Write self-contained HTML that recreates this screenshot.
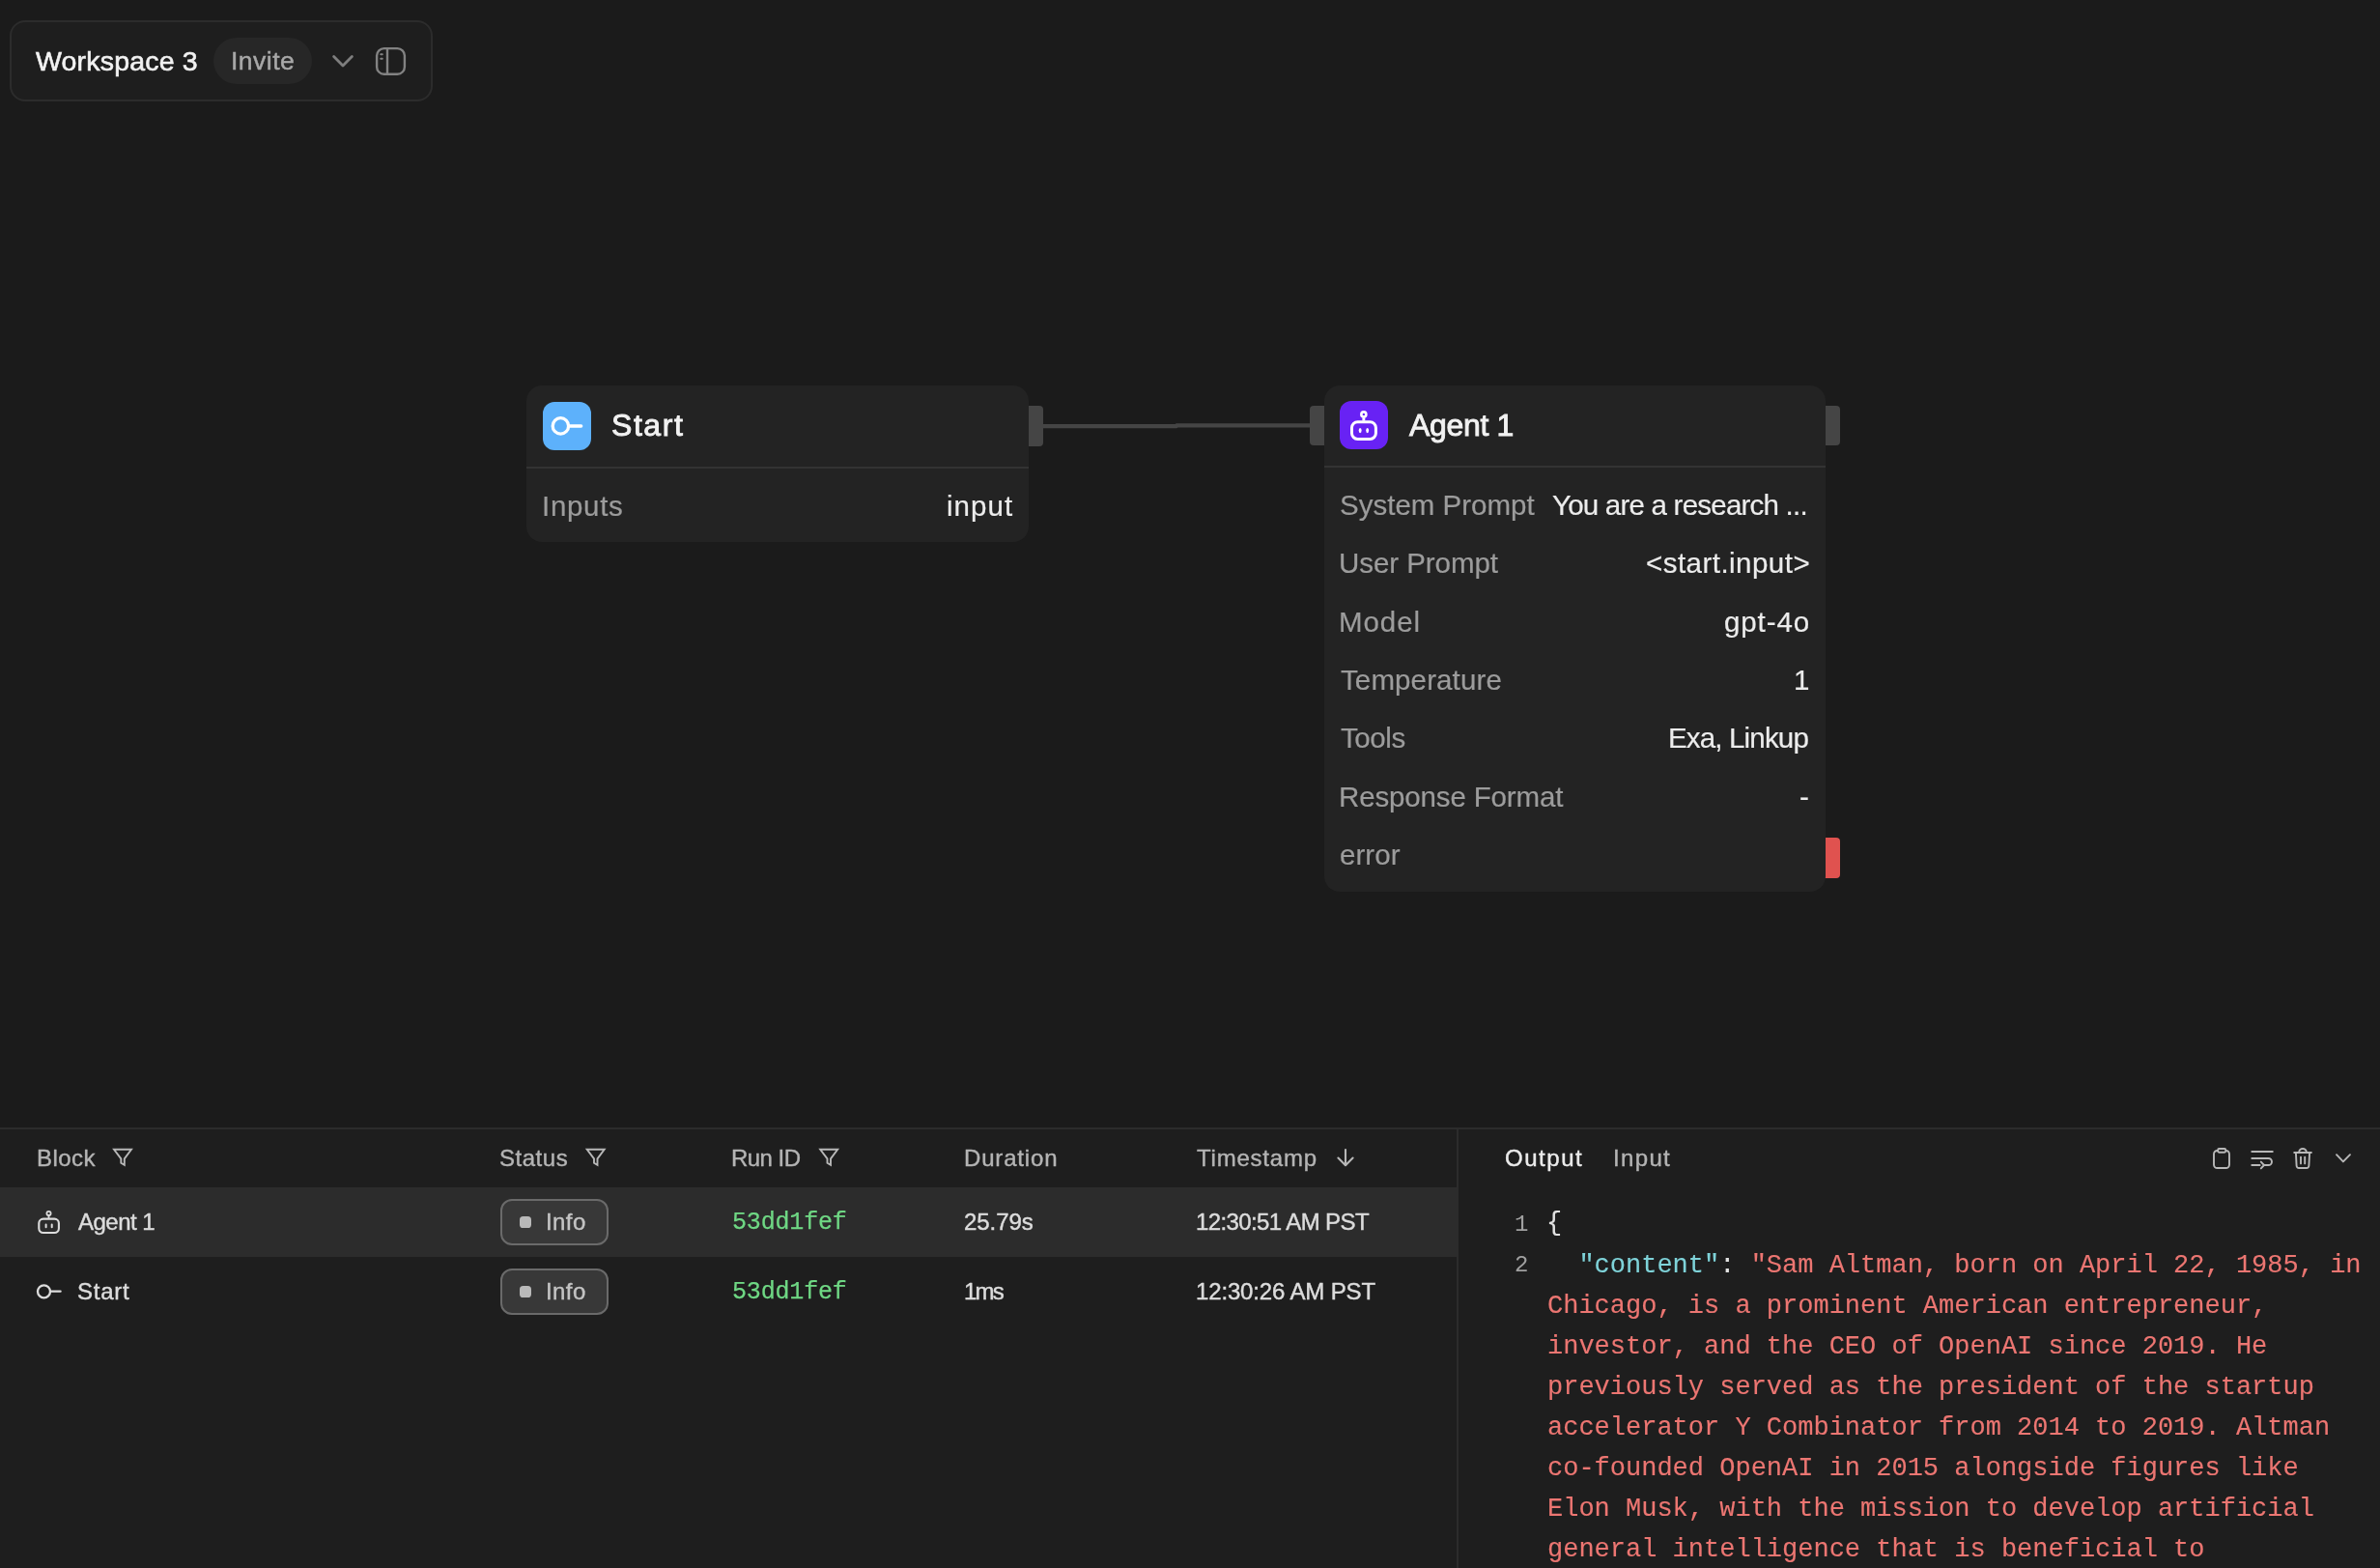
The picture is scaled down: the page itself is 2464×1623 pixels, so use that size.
<!DOCTYPE html>
<html><head><meta charset="utf-8"><title>Workspace 3</title>
<style>
html,body{margin:0;padding:0}
body{background:#1b1b1b;font-family:"Liberation Sans",sans-serif}
#root{position:relative;width:2464px;height:1623px;overflow:hidden;background:#1b1b1b}
.a{position:absolute;box-sizing:border-box}
.t{position:absolute;white-space:pre;line-height:1;will-change:transform}
svg{position:absolute;overflow:visible}
.code{position:absolute;-webkit-text-stroke:0.12px currentColor;left:1602.3px;top:1246.5px;font:27px/42px "Liberation Mono",monospace;color:#ec7672;white-space:pre;letter-spacing:0px;will-change:transform}
</style></head><body><div id="root">

<!-- header card -->
<div class="a" style="left:10px;top:21px;width:438px;height:84px;border:2px solid #2c2c2c;border-radius:16px;background:#1e1e1e"></div>
<div class="a" style="left:221px;top:39px;width:102px;height:48px;border-radius:24px;background:#272727"></div>
<svg style="left:0;top:0" width="460" height="110" fill="none" stroke="#828282" stroke-width="2.4" stroke-linecap="round" stroke-linejoin="round">
  <path d="M345.6 58.6 L355 68 L364.4 58.6" stroke-width="2.8" stroke="#7e7e7e"/>
  <rect x="390.1" y="50.1" width="28.8" height="26.6" rx="7.5"/>
  <path d="M401 50.1 V76.7"/>
  <path d="M394.2 56.2 H395.8 M394.2 60.8 H395.8" stroke-width="2"/>
</svg>

<!-- edge -->
<svg style="left:0;top:0" width="2464" height="600" fill="none" stroke="#454545" stroke-width="4.3"><path d="M1079 441.05 H1217.6 L1218.4 440.45 H1357"/></svg>

<!-- start node -->
<div class="a" style="left:1065px;top:420px;width:15px;height:42px;border-radius:0 4px 4px 0;background:#454545"></div>
<div class="a" style="left:545px;top:399.4px;width:520px;height:162px;border-radius:16px;background:#232323"></div>
<div class="a" style="left:545px;top:482.5px;width:520px;height:2px;background:#333333"></div>
<div class="a" style="left:562px;top:416px;width:50px;height:50px;border-radius:12px;background:#5db1fb"></div>
<svg style="left:0;top:0" width="2464" height="1000" fill="none" stroke="#fff" stroke-width="3.3" stroke-linecap="round">
  <circle cx="580.4" cy="440.9" r="8.2"/>
  <path d="M590 441.05 H601.6" stroke-width="3.5"/>
</svg>

<!-- agent node -->
<div class="a" style="left:1356px;top:420px;width:16px;height:41px;border-radius:4px 0 0 4px;background:#454545"></div>
<div class="a" style="left:1889px;top:420px;width:16.2px;height:41px;border-radius:0 4px 4px 0;background:#454545"></div>
<div class="a" style="left:1889px;top:866.6px;width:16.2px;height:42.2px;border-radius:0 4px 4px 0;background:#e0524f"></div>
<div class="a" style="left:1371px;top:399px;width:519px;height:524px;border-radius:16px;background:#232323"></div>
<div class="a" style="left:1371px;top:482px;width:519px;height:2px;background:#333333"></div>
<div class="a" style="left:1387px;top:415.4px;width:50px;height:50px;border-radius:12px;background:#6822f4"></div>
<svg style="left:0;top:0" width="2464" height="1000" fill="none" stroke="#fff" stroke-width="3" stroke-linecap="round" stroke-linejoin="round">
  <rect x="1399.5" y="436.7" width="24.9" height="17.7" rx="6"/>
  <circle cx="1411.85" cy="428.9" r="2.5" stroke-width="2.6"/>
  <path d="M1411.85 432.2 V435.6" stroke-width="2.9" stroke-linecap="butt"/>
  <ellipse cx="1408.15" cy="445.55" rx="1.45" ry="2.65" fill="#fff" stroke="none"/>
  <ellipse cx="1415.65" cy="445.55" rx="1.45" ry="2.65" fill="#fff" stroke="none"/>
</svg>

<!-- terminal -->
<div class="a" style="left:0;top:1167px;width:2464px;height:456px;background:#1e1e1e;border-top:2px solid #2c2c2c"></div>
<div class="a" style="left:0;top:1229px;width:1508px;height:72px;background:#2c2c2c"></div>
<div class="a" style="left:1508px;top:1168px;width:2px;height:455px;background:#2c2c2c"></div>

<!-- badges -->
<div class="a" style="left:518.2px;top:1240.8px;width:111.5px;height:48.2px;border:2px solid #6a6a6a;border-radius:12px;background:#383838"></div>
<div class="a" style="left:538px;top:1259px;width:12.1px;height:12.1px;border-radius:3.6px;background:#b9b9b9"></div>
<div class="a" style="left:518.2px;top:1312.8px;width:111.5px;height:48.2px;border:2px solid #6a6a6a;border-radius:12px;background:#383838"></div>
<div class="a" style="left:538px;top:1331px;width:12.1px;height:12.1px;border-radius:3.6px;background:#b9b9b9"></div>

<!-- terminal icons -->
<svg style="left:0;top:1100px" width="2464" height="523" viewBox="0 1100 2464 523" fill="none" stroke="#b8b8b8" stroke-width="1.9" stroke-linecap="round" stroke-linejoin="round">
  <!-- filters -->
  <path d="M118 1189.7 H136 L128.8 1199.4 V1205.8 L125.3 1203.8 V1199.4 Z" stroke-linejoin="miter"/>
  <path transform="translate(489.7 0)" d="M118 1189.7 H136 L128.8 1199.4 V1205.8 L125.3 1203.8 V1199.4 Z" stroke-linejoin="miter"/>
  <path transform="translate(731.2 0)" d="M118 1189.7 H136 L128.8 1199.4 V1205.8 L125.3 1203.8 V1199.4 Z" stroke-linejoin="miter"/>
  <!-- sort arrow -->
  <path d="M1393 1190 V1206 M1385.4 1198.6 L1393 1206.2 L1400.6 1198.6" stroke-width="2.1"/>
  <!-- row agent icon -->
  <g stroke="#dcdcdc" stroke-width="2.1">
    <rect x="40.3" y="1261.6" width="20.6" height="14.4" rx="4.5"/>
    <circle cx="50.5" cy="1255.9" r="2.1" stroke-width="1.8"/>
    <path d="M50.5 1258.6 V1260.8" stroke-width="1.8"/>
    <path d="M47.6 1267.6 V1270.2 M53.7 1267.6 V1270.2" stroke-width="2"/>
    <circle cx="45.5" cy="1336.8" r="6.5" stroke-width="2.3"/>
    <path d="M53 1336.7 H62.6" stroke-width="2.3"/>
  </g>
  <!-- clipboard -->
  <rect x="2292" y="1191" width="16" height="18" rx="3.5"/>
  <rect x="2296.2" y="1189" width="8" height="3.8" rx="1.2" fill="#1e1e1e"/>
  <!-- wrap -->
  <path d="M2331.3 1192 H2352.8 M2331.3 1199 H2348.5 A3.5 3.5 0 0 1 2348.5 1206 H2343.8 M2331.3 1206 H2339.6 M2340.8 1202.6 L2344 1206 L2340.8 1209.4"/>
  <!-- trash -->
  <path d="M2375.2 1193 H2392.9 M2376.9 1193 L2377.6 1206.6 A2.4 2.4 0 0 0 2380 1209 H2388 A2.4 2.4 0 0 0 2390.4 1206.6 L2391.1 1193 M2380.2 1192.6 A3.8 3.6 0 0 1 2387.8 1192.6 M2382 1197.6 V1204.4 M2386.2 1197.6 V1204.4"/>
  <!-- chevron -->
  <path d="M2419 1195.2 L2425.9 1202.4 L2433 1195.2"/>
</svg>

<!-- code -->
<div class="code"><span style="color:#e2e2e2;position:relative;top:-2.5px;left:-1px">{</span>
  <span style="color:#7fd3d9">"content"</span><span style="color:#e2e2e2">:</span> "Sam Altman, born on April 22, 1985, in
Chicago, is a prominent American entrepreneur,
investor, and the CEO of OpenAI since 2019. He
previously served as the president of the startup
accelerator Y Combinator from 2014 to 2019. Altman
co-founded OpenAI in 2015 alongside figures like
Elon Musk, with the mission to develop artificial
general intelligence that is beneficial to</div>

<span class="t" style="left:36.60px;top:48.87px;font:28.5px/1 'Liberation Sans';color:#f2f2f2;letter-spacing:0.185px;-webkit-text-stroke:0.6px currentColor;">Workspace 3</span>
<span class="t" style="left:238.85px;top:49.57px;font:26.5px/1 'Liberation Sans';color:#a8a8a8;letter-spacing:0.480px;-webkit-text-stroke:0.45px currentColor;">Invite</span>
<span class="t" style="left:632.90px;top:423.91px;font:32px/1 'Liberation Sans';color:#f2f2f2;letter-spacing:1.553px;-webkit-text-stroke:0.9px currentColor;">Start</span>
<span class="t" style="left:561.00px;top:509.03px;font:29.5px/1 'Liberation Sans';color:#9c9c9c;letter-spacing:0.698px;-webkit-text-stroke:0.2px currentColor;">Inputs</span>
<span class="t" style="left:979.70px;top:509.03px;font:29.5px/1 'Liberation Sans';color:#ececec;letter-spacing:1.032px;-webkit-text-stroke:0.2px currentColor;">input</span>
<span class="t" style="left:1459.00px;top:423.91px;font:32px/1 'Liberation Sans';color:#f2f2f2;letter-spacing:-0.319px;-webkit-text-stroke:0.9px currentColor;">Agent 1</span>
<span class="t" style="left:1387.00px;top:508.03px;font:29.5px/1 'Liberation Sans';color:#9c9c9c;letter-spacing:0.005px;-webkit-text-stroke:0.2px currentColor;">System Prompt</span>
<span class="t" style="left:1606.80px;top:508.03px;font:29.5px/1 'Liberation Sans';color:#ececec;letter-spacing:-0.780px;-webkit-text-stroke:0.2px currentColor;">You are a research ...</span>
<span class="t" style="left:1386.00px;top:568.03px;font:29.5px/1 'Liberation Sans';color:#9c9c9c;letter-spacing:-0.057px;-webkit-text-stroke:0.2px currentColor;">User Prompt</span>
<span class="t" style="left:1703.90px;top:568.03px;font:29.5px/1 'Liberation Sans';color:#ececec;letter-spacing:0.470px;-webkit-text-stroke:0.2px currentColor;">&lt;start.input&gt;</span>
<span class="t" style="left:1386.00px;top:629.03px;font:29.5px/1 'Liberation Sans';color:#9c9c9c;letter-spacing:0.927px;-webkit-text-stroke:0.2px currentColor;">Model</span>
<span class="t" style="left:1784.60px;top:629.03px;font:29.5px/1 'Liberation Sans';color:#ececec;letter-spacing:0.892px;-webkit-text-stroke:0.2px currentColor;">gpt-4o</span>
<span class="t" style="left:1388.00px;top:689.03px;font:29.5px/1 'Liberation Sans';color:#9c9c9c;letter-spacing:0.120px;-webkit-text-stroke:0.2px currentColor;">Temperature</span>
<span class="t" style="left:1857.40px;top:689.03px;font:29.5px/1 'Liberation Sans';color:#ececec;letter-spacing:0.000px;-webkit-text-stroke:0.2px currentColor;">1</span>
<span class="t" style="left:1388.00px;top:749.03px;font:29.5px/1 'Liberation Sans';color:#9c9c9c;letter-spacing:-0.429px;-webkit-text-stroke:0.2px currentColor;">Tools</span>
<span class="t" style="left:1726.90px;top:749.03px;font:29.5px/1 'Liberation Sans';color:#ececec;letter-spacing:-0.835px;-webkit-text-stroke:0.2px currentColor;">Exa, Linkup</span>
<span class="t" style="left:1386.00px;top:810.03px;font:29.5px/1 'Liberation Sans';color:#9c9c9c;letter-spacing:-0.147px;-webkit-text-stroke:0.2px currentColor;">Response Format</span>
<span class="t" style="left:1862.60px;top:810.03px;font:29.5px/1 'Liberation Sans';color:#ececec;letter-spacing:0.000px;-webkit-text-stroke:0.2px currentColor;">-</span>
<span class="t" style="left:1387.00px;top:870.03px;font:29.5px/1 'Liberation Sans';color:#9c9c9c;letter-spacing:0.060px;-webkit-text-stroke:0.2px currentColor;">error</span>
<span class="t" style="left:38.20px;top:1186.68px;font:24px/1 'Liberation Sans';color:#b4b4b4;letter-spacing:0.428px;-webkit-text-stroke:0.4px currentColor;">Block</span>
<span class="t" style="left:517.40px;top:1186.68px;font:24px/1 'Liberation Sans';color:#b4b4b4;letter-spacing:0.532px;-webkit-text-stroke:0.4px currentColor;">Status</span>
<span class="t" style="left:757.40px;top:1186.68px;font:24px/1 'Liberation Sans';color:#b4b4b4;letter-spacing:-0.533px;-webkit-text-stroke:0.4px currentColor;">Run ID</span>
<span class="t" style="left:997.70px;top:1186.68px;font:24px/1 'Liberation Sans';color:#b4b4b4;letter-spacing:0.833px;-webkit-text-stroke:0.4px currentColor;">Duration</span>
<span class="t" style="left:1238.60px;top:1186.68px;font:24px/1 'Liberation Sans';color:#b4b4b4;letter-spacing:0.781px;-webkit-text-stroke:0.4px currentColor;">Timestamp</span>
<span class="t" style="left:1558.10px;top:1186.68px;font:24px/1 'Liberation Sans';color:#ececec;letter-spacing:1.524px;-webkit-text-stroke:0.4px currentColor;">Output</span>
<span class="t" style="left:1669.70px;top:1186.68px;font:24px/1 'Liberation Sans';color:#b4b4b4;letter-spacing:1.347px;-webkit-text-stroke:0.4px currentColor;">Input</span>
<span class="t" style="left:80.75px;top:1252.68px;font:24px/1 'Liberation Sans';color:#dcdcdc;letter-spacing:-0.514px;-webkit-text-stroke:0.45px currentColor;">Agent 1</span>
<span class="t" style="left:565.30px;top:1252.68px;font:24px/1 'Liberation Sans';color:#c4c4c4;letter-spacing:0.405px;-webkit-text-stroke:0.4px currentColor;">Info</span>
<span class="t" style="left:757.95px;top:1252.84px;font:25px/1 'Liberation Mono';color:#6fd884;letter-spacing:-0.174px;-webkit-text-stroke:0.25px currentColor;">53dd1fef</span>
<span class="t" style="left:997.75px;top:1252.68px;font:24px/1 'Liberation Sans';color:#dcdcdc;letter-spacing:-0.052px;-webkit-text-stroke:0.45px currentColor;">25.79s</span>
<span class="t" style="left:1237.65px;top:1252.68px;font:24px/1 'Liberation Sans';color:#dcdcdc;letter-spacing:-0.612px;-webkit-text-stroke:0.45px currentColor;">12:30:51 AM PST</span>
<span class="t" style="left:79.95px;top:1324.68px;font:24px/1 'Liberation Sans';color:#dcdcdc;letter-spacing:0.771px;-webkit-text-stroke:0.45px currentColor;">Start</span>
<span class="t" style="left:565.30px;top:1324.68px;font:24px/1 'Liberation Sans';color:#c4c4c4;letter-spacing:0.405px;-webkit-text-stroke:0.4px currentColor;">Info</span>
<span class="t" style="left:757.95px;top:1324.84px;font:25px/1 'Liberation Mono';color:#6fd884;letter-spacing:-0.174px;-webkit-text-stroke:0.25px currentColor;">53dd1fef</span>
<span class="t" style="left:997.75px;top:1324.68px;font:24px/1 'Liberation Sans';color:#dcdcdc;letter-spacing:-1.770px;-webkit-text-stroke:0.45px currentColor;">1ms</span>
<span class="t" style="left:1237.65px;top:1324.68px;font:24px/1 'Liberation Sans';color:#dcdcdc;letter-spacing:-0.148px;-webkit-text-stroke:0.45px currentColor;">12:30:26 AM PST</span>
<span class="t" style="left:1567.50px;top:1255.60px;font:24px/1 'Liberation Mono';color:#a0a0a0;letter-spacing:0.000px;">1</span>
<span class="t" style="left:1568.00px;top:1297.60px;font:24px/1 'Liberation Mono';color:#a0a0a0;letter-spacing:0.000px;">2</span>
</div></body></html>
